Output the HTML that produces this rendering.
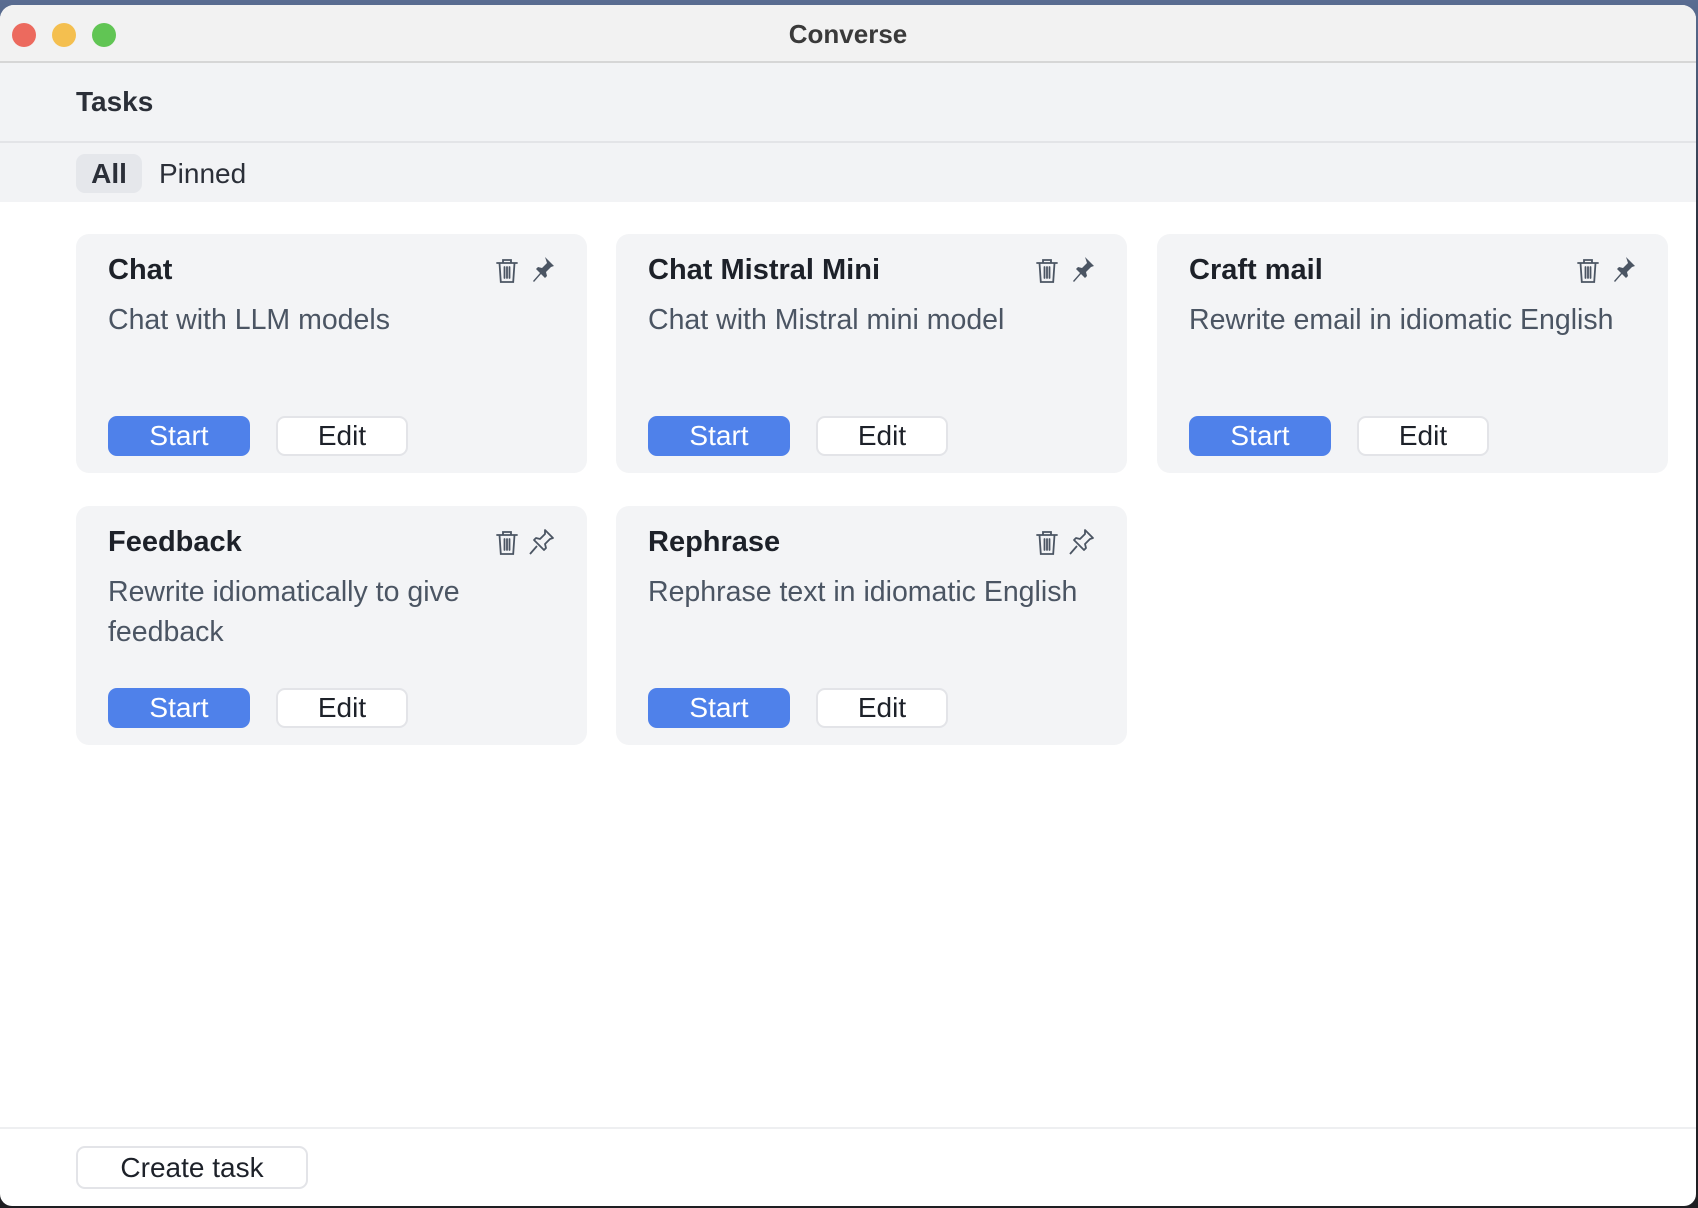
<!DOCTYPE html>
<html><head><meta charset="utf-8"><style>
*{box-sizing:border-box;margin:0;padding:0}
body{width:1698px;height:1208px;overflow:hidden;background:linear-gradient(#5a6d92,#2a2f3a 20%,#1e1e22);font-family:"Liberation Sans",sans-serif;position:relative}
.win{position:absolute;left:0;top:5px;width:1696px;height:1201px;background:#fff;border-radius:14px 14px 12px 12px;overflow:hidden}
.title{height:58px;background:#f2f2f2;border-bottom:2px solid #d6d6d6;position:relative}
.title .t{position:absolute;left:0;right:0;top:14px;text-align:center;font-weight:bold;font-size:26px;color:#3a3a3a}
.dot{position:absolute;top:18px;width:24px;height:24px;border-radius:50%}
.hdr{height:80px;background:#f2f3f5;border-bottom:2px solid #e3e4e7;padding-left:76px;font-weight:bold;font-size:28px;color:#2b2f38;line-height:78px}
.tabs{height:59px;background:#f2f3f5;position:relative}
.tab{position:absolute;top:11px;height:39px;line-height:39px;font-size:28px;color:#2b2f38;border-radius:9px}
.card{position:absolute;width:511px;height:239px;background:#f3f4f6;border-radius:13px}
.card h3{position:absolute;left:32px;top:20px;font-size:29px;color:#1d2129;font-weight:bold}
.card p{position:absolute;left:32px;top:66px;width:385px;font-size:28.5px;line-height:40px;color:#4b5563}
.btn{position:absolute;top:182px;height:40px;border-radius:9px;font-size:28px;text-align:center;line-height:40px}
.start{left:32px;width:142px;background:#4f81ea;color:#fff}
.edit{left:200px;width:132px;background:#fff;border:2px solid #e3e4e8;line-height:36px;color:#1d2129}
.ic{position:absolute;top:22px}
.foot{position:absolute;left:0;right:0;top:1122px;border-top:2px solid #eeeff1}
.create{position:absolute;left:76px;top:1141px;width:232px;height:43px;border:2px solid #e3e4e8;border-radius:9px;font-size:28px;text-align:center;line-height:39px;color:#1d2129}
</style></head><body>
<div class="win">
<div class="title"><div class="dot" style="left:12px;background:#ec6a5e"></div><div class="dot" style="left:52px;background:#f4bf4f"></div><div class="dot" style="left:92px;background:#61c554"></div><div class="t">Converse</div></div>
<div class="hdr">Tasks</div>
<div class="tabs"><div class="tab" style="left:76px;width:66px;background:#e5e7eb;font-weight:bold;text-align:center">All</div><div class="tab" style="left:159px">Pinned</div></div>
<div class="foot"></div>
<div class="create">Create task</div>
</div>
<svg width="0" height="0" style="position:absolute"><defs>
<g id="trash" fill="none" stroke="#4b5563" stroke-width="1.8" stroke-linecap="round"><path d="M3 7h20M9 7V4h8v3M5.5 7l1.3 19h12.4L20.5 7M10.5 11v11M13 11v11M15.5 11v11"/></g>
<g id="pinf"><path d="M17 1l9 9-3 1-5 5 1 4-2 2-4-4-7 8-1-1 7-8-4-4 2-2 4 1 5-5z" fill="#4b5563"/></g>
<g id="pino"><path d="M17 2l8 8-3 1-5 5 1 4-2 2-10-10 2-2 4 1 5-5zM9 18l-7 8" fill="none" stroke="#4b5563" stroke-width="1.8" stroke-linejoin="round"/></g>
</defs></svg>
<div class="card" style="left:76px;top:234px"><h3>Chat</h3><p>Chat with LLM models</p><svg class="ic" style="left:418px" width="28" height="30"><use href="#trash"/></svg><svg class="ic" style="left:452px" width="28" height="28"><use href="#pinf"/></svg><div class="btn start">Start</div><div class="btn edit">Edit</div></div>
<div class="card" style="left:616px;top:234px"><h3>Chat Mistral Mini</h3><p>Chat with Mistral mini model</p><svg class="ic" style="left:418px" width="28" height="30"><use href="#trash"/></svg><svg class="ic" style="left:452px" width="28" height="28"><use href="#pinf"/></svg><div class="btn start">Start</div><div class="btn edit">Edit</div></div>
<div class="card" style="left:1157px;top:234px"><h3>Craft mail</h3><p style="width:470px">Rewrite email in idiomatic English</p><svg class="ic" style="left:418px" width="28" height="30"><use href="#trash"/></svg><svg class="ic" style="left:452px" width="28" height="28"><use href="#pinf"/></svg><div class="btn start">Start</div><div class="btn edit">Edit</div></div>
<div class="card" style="left:76px;top:506px"><h3>Feedback</h3><p>Rewrite idiomatically to give feedback</p><svg class="ic" style="left:418px" width="28" height="30"><use href="#trash"/></svg><svg class="ic" style="left:452px" width="28" height="28"><use href="#pino"/></svg><div class="btn start">Start</div><div class="btn edit">Edit</div></div>
<div class="card" style="left:616px;top:506px"><h3>Rephrase</h3><p style="width:470px">Rephrase text in idiomatic English</p><svg class="ic" style="left:418px" width="28" height="30"><use href="#trash"/></svg><svg class="ic" style="left:452px" width="28" height="28"><use href="#pino"/></svg><div class="btn start">Start</div><div class="btn edit">Edit</div></div>
</body></html>
